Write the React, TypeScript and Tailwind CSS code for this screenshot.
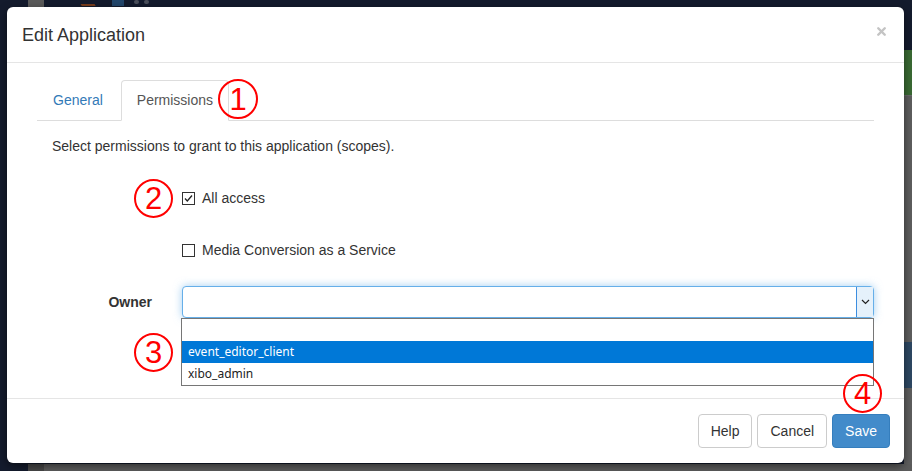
import { X } from "lucide-react";

function Marker({ n, className }: { n: string; className: string }) {
  // red hand-drawn annotation circle
  return (
    <div
      className={`absolute z-20 flex items-center justify-center rounded-full border-2 border-[#ff0000] text-[#ff0000] text-[31px] leading-none font-['Liberation_Sans',sans-serif] ${className}`}
    >
      {n}
    </div>
  );
}

function Checkbox({ checked, label }: { checked?: boolean; label: string }) {
  return (
    <label className="flex items-center gap-[7px] h-[20px] text-[14px] text-[#333]">
      <span className="w-[13px] h-[13px] border border-[#333] bg-white flex items-center justify-center">
        {checked && (
          <svg width="11" height="11" viewBox="0 0 11 11">
            <path d="M2 5.5 L4.3 8 L9 2.5" fill="none" stroke="#222" strokeWidth="1.3" />
          </svg>
        )}
      </span>
      {label}
    </label>
  );
}

export default function App() {
  return (
    <div className="relative w-[912px] h-[471px] overflow-hidden bg-[#141b2d] font-['Liberation_Sans',Arial,sans-serif]">
      {/* dimmed page behind the modal */}
      <div className="absolute left-[28px] top-0 w-[16px] h-[7px] bg-[#5a5a5a]" />
      <div className="absolute left-[80px] top-0 w-[14px] h-[6px] border-b-2 border-[#7a3d1c] skew-x-[30deg]" />
      <div className="absolute left-[112px] top-0 w-[12px] h-[6px] bg-[#22466b]" />
      <div className="absolute left-[134px] top-0 w-[5px] h-[4px] rounded-full bg-[#4a4f5a]" />
      <div className="absolute left-[144px] top-0 w-[5px] h-[4px] rounded-full bg-[#4a4f5a]" />
      <div className="absolute right-0 top-[50px] w-[8px] flex flex-col">
        <div className="h-[45px] bg-[#3a6a33]" />
        <div className="h-[247px] bg-[#5e5e5e] border-t border-[#6a6a6a]" />
        <div className="h-[46px] bg-[#2d4863]" />
        <div className="h-[90px] bg-[#5e5e5e]" />
      </div>
      <div className="absolute left-0 bottom-0 w-full h-[7px] flex">
        <div className="w-[28px] bg-[#141b2d]" />
        <div className="w-[16px] bg-[#484848]" />
        <div className="flex-1 bg-[#5c5c5c]" />
      </div>

      {/* modal */}
      <div className="absolute left-[7px] top-[7px] w-[897px] h-[456px] bg-white rounded-[6px] flex flex-col shadow-[0_3px_9px_rgba(0,0,0,0.5)]">
        <div className="h-[56px] flex items-center justify-between px-[15px] border-b border-[#e5e5e5]">
          <h4 className="text-[18px] text-[#333] leading-[26px]">Edit Application</h4>
          <X className="w-[13px] h-[13px] text-[#c4c4c4] mr-[1px] mb-[6px]" strokeWidth={4.5} />
        </div>

        <div className="flex-1 px-[30px] pt-[17px]">
          <ul className="flex border-b border-[#ddd] h-[41px]">
            <li className="px-[16px] h-[41px] flex items-center text-[14px] text-[#337ab7] mr-[2px]">General</li>
            <li className="px-[15px] h-[41px] flex items-center text-[14px] text-[#555] border border-[#ddd] border-b-white rounded-t-[4px] bg-white">
              Permissions
            </li>
          </ul>

          <p className="mt-[15px] pl-[15px] text-[14px] leading-[20px] text-[#333]">
            Select permissions to grant to this application (scopes).
          </p>

          <div className="mt-[32px] pl-[145px] flex flex-col gap-[32px]">
            <Checkbox checked label="All access" />
            <Checkbox label="Media Conversion as a Service" />
          </div>

          <div className="mt-[26px] flex items-center">
            <div className="w-[145px] pr-[30px] text-right text-[14px] font-bold text-[#333]">Owner</div>
            <div className="relative flex-1">
              <div className="h-[32px] border border-[#66afe9] rounded-[4px] shadow-[0_0_8px_rgba(102,175,233,0.6)] bg-white flex justify-end">
                <div className="w-[17px] h-full bg-[#e5f1fb] border-l border-[#3c8ee0] flex items-center justify-center">
                  <svg width="9" height="6" viewBox="0 0 9 6">
                    <path d="M1 1 L4.5 4.5 L8 1" fill="none" stroke="#222" strokeWidth="1.2" />
                  </svg>
                </div>
              </div>
              <ul className="absolute left-[-1px] right-0 top-[32px] border border-[#767676] bg-white text-[12px] font-['Noto_Sans',sans-serif] z-10">
                <li className="h-[22px]" />
                <li className="h-[22px] flex items-center pl-[6px] bg-[#0078d7] text-white">event_editor_client</li>
                <li className="h-[22px] flex items-center pl-[6px] text-[#222]">xibo_admin</li>
              </ul>
            </div>
          </div>
        </div>

        <div className="h-[65px] border-t border-[#e5e5e5] flex items-center justify-end gap-[5px] px-[14px]">
          <button className="h-[34px] px-[12px] text-[14px] text-[#333] border border-[#ccc] rounded-[4px] bg-white">Help</button>
          <button className="h-[34px] px-[12px] text-[14px] text-[#333] border border-[#ccc] rounded-[4px] bg-white">Cancel</button>
          <button className="h-[34px] px-[12px] text-[14px] text-white border border-[#357ebd] rounded-[4px] bg-[#428bca]">Save</button>
        </div>

        <Marker n="1" className="left-[211px] top-[72px] w-[40px] h-[40px]" />
        <Marker n="2" className="left-[127px] top-[172px] w-[39px] h-[39px]" />
        <Marker n="3" className="left-[127px] top-[326px] w-[39px] h-[39px]" />
        <Marker n="4" className="left-[836px] top-[367px] w-[39px] h-[39px]" />
      </div>
    </div>
  );
}
